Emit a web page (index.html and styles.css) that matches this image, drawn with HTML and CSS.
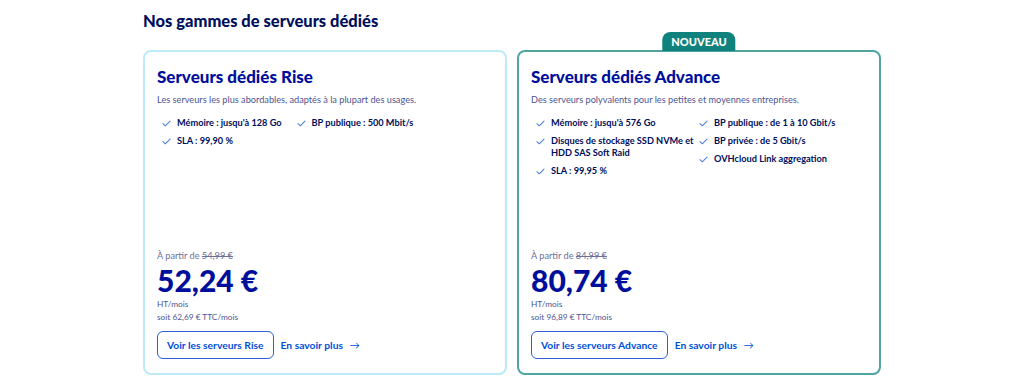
FILE: index.html
```html
<!DOCTYPE html>
<html lang="fr">
<head>
    <meta charset="UTF-8">
    <meta name="viewport" content="width=device-width, initial-scale=1.0">
    <title>Nos gammes de serveurs dédiés</title>

    <link rel="stylesheet" href="styles.css">
</head>
<body>

<div class="ranges">
    <h2 class="ranges-title">Nos gammes de serveurs dédiés</h2>

    <div class="cards">
        <!-- Rise -->
        <div class="card card-rise">
            <h3 class="card-title">Serveurs dédiés Rise</h3>
            <p class="card-desc">Les serveurs les plus abordables, adaptés à la plupart des usages.</p>

            <div class="features">
                <ul class="feature-col">
                    <li><svg class="check" viewBox="0 0 10 8"><polyline points="1,4.2 3.6,6.6 9,1.2"/></svg>Mémoire : jusqu'à 128 Go</li>
                    <li><svg class="check" viewBox="0 0 10 8"><polyline points="1,4.2 3.6,6.6 9,1.2"/></svg>SLA : 99,90 %</li>
                </ul>
                <ul class="feature-col">
                    <li><svg class="check" viewBox="0 0 10 8"><polyline points="1,4.2 3.6,6.6 9,1.2"/></svg>BP publique : 500 Mbit/s</li>
                </ul>
            </div>

            <div class="pricing">
                <div class="from">À partir de <s>54,99 €</s></div>
                <div class="price">52,24 €</div>
                <div class="small">HT/mois</div>
                <div class="small">soit 62,69 € TTC/mois</div>
                <div class="actions">
                    <a class="btn" href="#">Voir les serveurs Rise</a>
                    <a class="more" href="#">En savoir plus <span class="arrow">→</span></a>
                </div>
            </div>
        </div>

        <!-- Advance -->
        <div class="card card-advance">
            <span class="badge">NOUVEAU</span>
            <h3 class="card-title">Serveurs dédiés Advance</h3>
            <p class="card-desc">Des serveurs polyvalents pour les petites et moyennes entreprises.</p>

            <div class="features features-half">
                <ul class="feature-col feature-col-half">
                    <li><svg class="check" viewBox="0 0 10 8"><polyline points="1,4.2 3.6,6.6 9,1.2"/></svg>Mémoire : jusqu'à 576 Go</li>
                    <li><svg class="check" viewBox="0 0 10 8"><polyline points="1,4.2 3.6,6.6 9,1.2"/></svg>Disques de stockage SSD NVMe et HDD SAS Soft Raid</li>
                    <li><svg class="check" viewBox="0 0 10 8"><polyline points="1,4.2 3.6,6.6 9,1.2"/></svg>SLA : 99,95 %</li>
                </ul>
                <ul class="feature-col">
                    <li><svg class="check" viewBox="0 0 10 8"><polyline points="1,4.2 3.6,6.6 9,1.2"/></svg>BP publique : de 1 à 10 Gbit/s</li>
                    <li><svg class="check" viewBox="0 0 10 8"><polyline points="1,4.2 3.6,6.6 9,1.2"/></svg>BP privée : de 5 Gbit/s</li>
                    <li><svg class="check" viewBox="0 0 10 8"><polyline points="1,4.2 3.6,6.6 9,1.2"/></svg>OVHcloud Link aggregation</li>
                </ul>
            </div>

            <div class="pricing">
                <div class="from">À partir de <s>84,99 €</s></div>
                <div class="price">80,74 €</div>
                <div class="small">HT/mois</div>
                <div class="small">soit 96,89 € TTC/mois</div>
                <div class="actions">
                    <a class="btn" href="#">Voir les serveurs Advance</a>
                    <a class="more" href="#">En savoir plus <span class="arrow">→</span></a>
                </div>
            </div>
        </div>
    </div>
</div>

</body>
</html>
```

FILE: styles.css
```css
body {
    font-family: 'Lato', 'Open Sans', sans-serif;
    background: #fff;
    margin: 0;
    color: #000e5c;
}

.ranges {
    width: 738px;
    margin: 0 auto;
}

.ranges-title {
    font-size: 16.5px;
    font-weight: 900;
    color: #000e5c;
    margin: 0;
    padding-top: 10px;
    line-height: 22px;
}

.cards {
    display: flex;
    gap: 10px;
    margin-top: 18px;
}

.card {
    position: relative;
    flex: 1;
    height: 325px;
    box-sizing: border-box;
    border: 2px solid #bdeaf8;
    border-radius: 8px;
    padding: 13px 12px 14px;
    display: flex;
    flex-direction: column;
}

.card-advance {
    border-color: #4fa5a2;
}

.badge {
    position: absolute;
    top: -20px;
    left: 50%;
    transform: translateX(-50%);
    background: #0f827e;
    color: #fff;
    font-size: 11px;
    font-weight: 900;
    line-height: 19px;
    padding: 0 9px;
    border-radius: 8px 8px 0 0;
}

.card-title {
    font-size: 17px;
    font-weight: 900;
    color: #000e9c;
    margin: 0;
    line-height: 24px;
}

.card-desc {
    font-size: 9.2px;
    color: #4d5592;
    margin: 5px 0 0;
    line-height: 12px;
}

.features {
    display: flex;
    gap: 10px;
    margin-top: 11px;
}

.features-half {
    gap: 0;
}

.feature-col {
    list-style: none;
    margin: 0;
    padding: 0 0 0 5px;
}

.feature-col-half {
    width: 158px;
    flex-shrink: 0;
}

.feature-col li {
    display: flex;
    align-items: flex-start;
    font-size: 9.2px;
    font-weight: 700;
    line-height: 12px;
    color: #000e5c;
    margin-bottom: 6px;
}

.check {
    width: 9px;
    height: 7px;
    flex-shrink: 0;
    margin: 3px 6px 0 0;
    fill: none;
    stroke: #4d7fdb;
    stroke-width: 1.2;
    stroke-linecap: round;
    stroke-linejoin: round;
}

.pricing {
    margin-top: auto;
}

.from {
    font-size: 9.2px;
    color: #6b7099;
    line-height: 12px;
}

.from s {
    color: #6b7099;
}

.price {
    font-size: 30px;
    font-weight: 900;
    color: #000e9c;
    line-height: 36px;
}

.small {
    font-size: 8.3px;
    color: #4d5592;
    line-height: 13px;
}

.actions {
    display: flex;
    align-items: center;
    gap: 7px;
    margin-top: 7px;
}

.btn {
    display: inline-block;
    border: 1.5px solid #2d5fd8;
    border-radius: 6px;
    color: #0050d7;
    font-size: 10.3px;
    font-weight: 700;
    line-height: 26px;
    padding: 0 9px;
    text-decoration: none;
}

.more {
    color: #0050d7;
    font-size: 10.3px;
    font-weight: 700;
    text-decoration: none;
}

.arrow {
    margin-left: 4px;
    font-weight: 400;
}
```
